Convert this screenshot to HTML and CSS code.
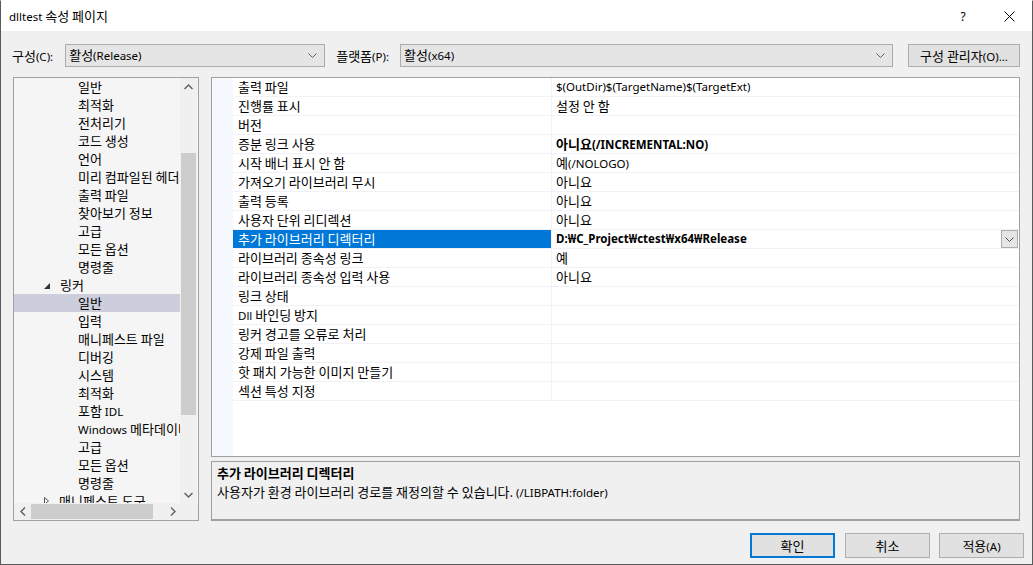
FILE: index.html
```html
<!DOCTYPE html>
<html>
  <head>
    <title>dlltest 속성 페이지</title>
    <link rel="stylesheet" href="styles.css">
  </head>
  <body>
    <div class="window">
      <div class="titlebar">
        <span class="title"><span class="en">dlltest</span> 속성 페이지</span>
        <div class="caption-btns">
          <span class="cap-btn help">?</span>
          <span class="cap-btn close">
            <svg width="11" height="11" viewBox="0 0 11 11"><path d="M0.5 0.5 L10.5 10.5 M10.5 0.5 L0.5 10.5" stroke="#000" stroke-width="1" fill="none"/></svg>
          </span>
        </div>
      </div>

      <div class="toolbar">
        <label class="tb-label">구성<span class="en">(C):</span></label>
        <div class="combo config">
          <span>활성<span class="en">(Release)</span></span>
          <svg class="chev" width="9" height="5" viewBox="0 0 9 5"><path d="M0.5 0.5 L4.5 4.5 L8.5 0.5" stroke="#606060" fill="none"/></svg>
        </div>
        <label class="tb-label platform-label">플랫폼<span class="en">(P):</span></label>
        <div class="combo platform">
          <span>활성<span class="en">(x64)</span></span>
          <svg class="chev" width="9" height="5" viewBox="0 0 9 5"><path d="M0.5 0.5 L4.5 4.5 L8.5 0.5" stroke="#606060" fill="none"/></svg>
        </div>
        <button class="btn manager">구성 관리자<span class="en">(O)...</span></button>
      </div>

      <div class="main">
        <div class="tree">
          <div class="tree-body">
            <ul class="tree-items">
              <li class="child">일반</li>
              <li class="child">최적화</li>
              <li class="child">전처리기</li>
              <li class="child">코드 생성</li>
              <li class="child">언어</li>
              <li class="child">미리 컴파일된 헤더</li>
              <li class="child">출력 파일</li>
              <li class="child">찾아보기 정보</li>
              <li class="child">고급</li>
              <li class="child">모든 옵션</li>
              <li class="child">명령줄</li>
              <li class="parent">
                <svg class="tri" width="6" height="6" viewBox="0 0 6 6"><polygon points="6,0 6,6 0,6" fill="#333"/></svg>링커
              </li>
              <li class="child selected">일반</li>
              <li class="child">입력</li>
              <li class="child">매니페스트 파일</li>
              <li class="child">디버깅</li>
              <li class="child">시스템</li>
              <li class="child">최적화</li>
              <li class="child">포함 <span class="en">IDL</span></li>
              <li class="child"><span class="en">Windows</span> 메타데이터</li>
              <li class="child">고급</li>
              <li class="child">모든 옵션</li>
              <li class="child">명령줄</li>
              <li class="parent">
                <svg class="tri" width="5" height="8" viewBox="0 0 5 8"><polygon points="0.5,0.5 4.5,4 0.5,7.5" fill="none" stroke="#555"/></svg>매니페스트 도구
              </li>
            </ul>
            <div class="vscroll">
              <div class="sb-arrow">
                <svg width="9" height="6" viewBox="0 0 9 6"><path d="M0.5 5 L4.5 1 L8.5 5" stroke="#606060" stroke-width="1.4" fill="none"/></svg>
              </div>
              <div class="sb-gap-top"></div>
              <div class="sb-thumb-v"></div>
              <div class="sb-fill"></div>
              <div class="sb-arrow">
                <svg width="9" height="6" viewBox="0 0 9 6"><path d="M0.5 1 L4.5 5 L8.5 1" stroke="#606060" stroke-width="1.4" fill="none"/></svg>
              </div>
            </div>
          </div>
          <div class="hscroll">
            <div class="sb-arrow-h">
              <svg width="6" height="9" viewBox="0 0 6 9"><path d="M5 0.5 L1 4.5 L5 8.5" stroke="#606060" stroke-width="1.4" fill="none"/></svg>
            </div>
            <div class="sb-thumb-h"></div>
            <div class="sb-fill"></div>
            <div class="sb-arrow-h">
              <svg width="6" height="9" viewBox="0 0 6 9"><path d="M1 0.5 L5 4.5 L1 8.5" stroke="#606060" stroke-width="1.4" fill="none"/></svg>
            </div>
            <div class="sb-corner"></div>
          </div>
        </div>

        <div class="right">
          <div class="grid">
            <div class="grid-rows">
              <div class="prow"><div class="pname">출력 파일</div><div class="pval en">$(OutDir)$(TargetName)$(TargetExt)</div></div>
              <div class="prow"><div class="pname">진행률 표시</div><div class="pval">설정 안 함</div></div>
              <div class="prow"><div class="pname">버전</div><div class="pval"></div></div>
              <div class="prow"><div class="pname">증분 링크 사용</div><div class="pval bold"><span>아니요<span class="en">(/INCREMENTAL:NO)</span></span></div></div>
              <div class="prow"><div class="pname">시작 배너 표시 안 함</div><div class="pval"><span>예<span class="en">(/NOLOGO)</span></span></div></div>
              <div class="prow"><div class="pname">가져오기 라이브러리 무시</div><div class="pval">아니요</div></div>
              <div class="prow"><div class="pname">출력 등록</div><div class="pval">아니요</div></div>
              <div class="prow"><div class="pname">사용자 단위 리디렉션</div><div class="pval">아니요</div></div>
              <div class="prow active">
                <div class="pname">추가 라이브러리 디렉터리</div>
                <div class="pval bold">
                  <span class="en">D:₩C_Project₩ctest₩x64₩Release</span>
                  <span class="drop-btn">
                    <svg width="9" height="5" viewBox="0 0 9 5"><path d="M0.5 0.5 L4.5 4.5 L8.5 0.5" stroke="#505050" fill="none"/></svg>
                  </span>
                </div>
              </div>
              <div class="prow"><div class="pname">라이브러리 종속성 링크</div><div class="pval">예</div></div>
              <div class="prow"><div class="pname">라이브러리 종속성 입력 사용</div><div class="pval">아니요</div></div>
              <div class="prow"><div class="pname">링크 상태</div><div class="pval"></div></div>
              <div class="prow"><div class="pname"><span class="en">Dll</span> 바인딩 방지</div><div class="pval"></div></div>
              <div class="prow"><div class="pname">링커 경고를 오류로 처리</div><div class="pval"></div></div>
              <div class="prow"><div class="pname">강제 파일 출력</div><div class="pval"></div></div>
              <div class="prow"><div class="pname">핫 패치 가능한 이미지 만들기</div><div class="pval"></div></div>
              <div class="prow"><div class="pname">섹션 특성 지정</div><div class="pval"></div></div>
            </div>
          </div>
          <div class="desc">
            <div class="desc-title">추가 라이브러리 디렉터리</div>
            <div class="desc-text">사용자가 환경 라이브러리 경로를 재정의할 수 있습니다. <span class="en">(/LIBPATH:folder)</span></div>
          </div>
        </div>
      </div>

      <div class="footer">
        <button class="btn dlg-btn default">확인</button>
        <button class="btn dlg-btn">취소</button>
        <button class="btn dlg-btn">적용<span class="en">(A)</span></button>
      </div>
    </div>
  </body>
</html>
```

FILE: styles.css
```css
* {
  box-sizing: border-box;
}
body {
  margin: 0;
  font-family: "Noto Sans CJK KR", "Noto Sans", sans-serif;
  font-size: 13px;
  color: #000;
  background: #f0f0f0;
}
.en {
  font-family: "Noto Sans", sans-serif;
  font-size: 11.5px;
}
.window {
  width: 1033px;
  height: 565px;
  background: #f0f0f0;
  border: 1px solid #5a5a5a;
  border-top-color: #ffffff;
  display: flex;
  flex-direction: column;
}
.titlebar {
  flex-shrink: 0;
  height: 30px;
  background: #fff;
  display: flex;
  align-items: center;
  justify-content: space-between;
  padding-left: 8px;
}
.title {
  line-height: 16px;
}
.caption-btns {
  display: flex;
  height: 100%;
}
.cap-btn {
  width: 46px;
  display: flex;
  align-items: center;
  justify-content: center;
}
.help {
  font-family: "Noto Sans", sans-serif;
  font-size: 12px;
}

.toolbar {
  flex-shrink: 0;
  display: flex;
  align-items: flex-start;
  padding: 13px 12px 0 11px;
  height: 46px;
}
.tb-label {
  line-height: 23px;
  margin-right: 12px;
}
.platform-label {
  margin-left: 11px;
  margin-right: 11px;
}
.combo {
  height: 23px;
  background: #e5e5e5;
  border: 1px solid #acacac;
  display: flex;
  align-items: center;
  justify-content: space-between;
  padding: 0 6px 0 3px;
  line-height: 16px;
}
.config {
  width: 260px;
}
.platform {
  width: 493px;
}
.chev {
  margin-right: 1px;
}
.btn {
  font-family: inherit;
  font-size: 13px;
  background: #e1e1e1;
  border: 1px solid #adadad;
  color: #000;
  padding: 0;
}
.manager {
  margin-left: auto;
  width: 112px;
  height: 23px;
}

.main {
  flex-shrink: 0;
  display: flex;
  padding: 0 12px 0 12px;
  gap: 12px;
  height: 444px;
}
.tree {
  width: 186px;
  height: 444px;
  border: 1px solid #a0a0a0;
  background: #f5f5f5;
  display: flex;
  flex-direction: column;
}
.tree-body {
  flex: 1;
  display: flex;
  overflow: hidden;
}
.tree-items {
  list-style: none;
  margin: 0;
  padding: 0;
  width: 166px;
  overflow: hidden;
}
.tree-items li {
  height: 18px;
  line-height: 18px;
  white-space: nowrap;
  overflow: hidden;
}
.child {
  padding-left: 64px;
}
.parent {
  padding-left: 30px;
}
.tri {
  margin-right: 10px;
  vertical-align: 1px;
}
.selected {
  background: #cccedb;
}
.vscroll {
  width: 17px;
  background: #f0f0f0;
  display: flex;
  flex-direction: column;
}
.sb-arrow {
  height: 17px;
  display: flex;
  align-items: center;
  justify-content: center;
}
.sb-gap-top {
  height: 58px;
}
.sb-thumb-v {
  height: 262px;
  background: #cdcdcd;
  margin: 0 1px;
}
.sb-fill {
  flex: 1;
}
.hscroll {
  height: 17px;
  display: flex;
  background: #f0f0f0;
}
.sb-arrow-h {
  width: 17px;
  display: flex;
  align-items: center;
  justify-content: center;
}
.sb-thumb-h {
  width: 122px;
  background: #cdcdcd;
  margin: 1px 0;
}
.sb-corner {
  width: 17px;
  background: #f0f0f0;
}

.right {
  flex: 1;
  display: flex;
  flex-direction: column;
  gap: 4px;
}
.grid {
  height: 380px;
  background: #fff;
  border: 1px solid #a0a0a0;
  padding-left: 21px;
  position: relative;
}
.grid::before {
  content: "";
  position: absolute;
  left: 0;
  top: 0;
  bottom: 0;
  width: 21px;
  background: #f5f8fd;
}
.prow {
  display: flex;
  height: 19px;
  border-bottom: 1px solid #f0f2f7;
  line-height: 18px;
}
.pname {
  width: 319px;
  padding-left: 5px;
  border-right: 1px solid #f0f2f7;
  white-space: nowrap;
}
.pval {
  flex: 1;
  padding-left: 4px;
  white-space: nowrap;
  display: flex;
  justify-content: space-between;
}
.bold {
  font-weight: bold;
}
.active .pname {
  background: #0078d7;
  color: #fff;
}
.drop-btn {
  width: 17px;
  height: 18px;
  background: #e5e5e5;
  border: 1px solid #acacac;
  display: flex;
  align-items: center;
  justify-content: center;
  margin-right: 1px;
}
.desc {
  height: 60px;
  border: 1px solid #a0a0a0;
  border-bottom: 2px solid #a0a0a0;
  padding: 1px 5px;
  line-height: 19px;
}
.desc-title {
  font-weight: bold;
}

.footer {
  flex-shrink: 0;
  display: flex;
  justify-content: flex-end;
  gap: 9px;
  padding: 12px 8px 0 0;
}
.dlg-btn {
  width: 85px;
  height: 25px;
  border-color: #adadad;
}
.default {
  border: 2px solid #0078d7;
  margin-right: 1px;
}
```
